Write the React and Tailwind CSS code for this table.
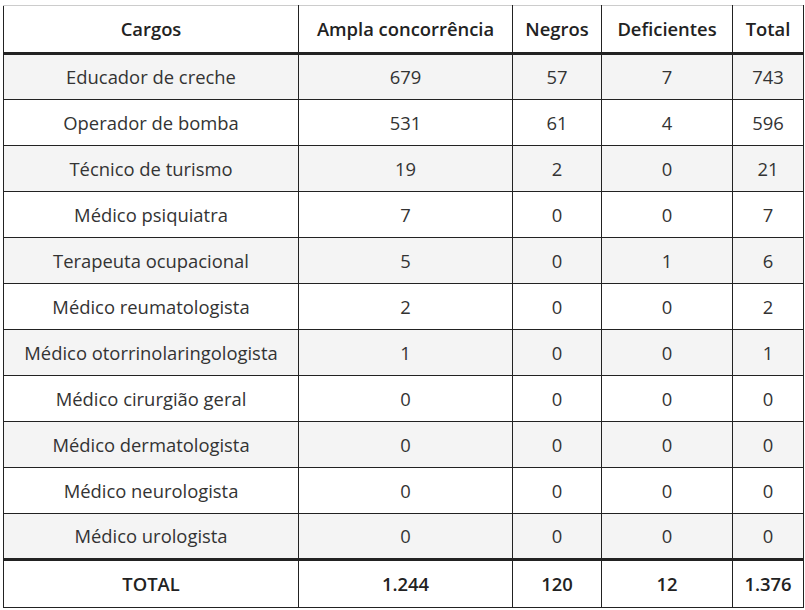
const rows = [
  ["Educador de creche", "679", "57", "7", "743"],
  ["Operador de bomba", "531", "61", "4", "596"],
  ["Técnico de turismo", "19", "2", "0", "21"],
  ["Médico psiquiatra", "7", "0", "0", "7"],
  ["Terapeuta ocupacional", "5", "0", "1", "6"],
  ["Médico reumatologista", "2", "0", "0", "2"],
  ["Médico otorrinolaringologista", "1", "0", "0", "1"],
  ["Médico cirurgião geral", "0", "0", "0", "0"],
  ["Médico dermatologista", "0", "0", "0", "0"],
  ["Médico neurologista", "0", "0", "0", "0"],
  ["Médico urologista", "0", "0", "0", "0"],
];

const headers = ["Cargos", "Ampla concorrência", "Negros", "Deficientes", "Total"];
const totals = ["TOTAL", "1.244", "120", "12", "1.376"];

export default function App() {
  return (
    <div className="bg-white min-h-screen pl-[3px] pt-[5px] text-[#333] font-['Open_Sans',sans-serif] text-[18.4px]">
      <table className="table-fixed w-[800px] border-collapse text-center">
        <colgroup>
          <col className="w-[295px]" />
          <col className="w-[214px]" />
          <col className="w-[89px]" />
          <col className="w-[131px]" />
          <col className="w-[71px]" />
        </colgroup>
        <thead>
          <tr className="h-[48px] border-b-[3px] border-b-[#222]">
            {headers.map((h) => (
              <th
                key={h}
                className="border-x border-x-[#222] border-t border-t-[#ccc] font-semibold text-[#222] p-0 pb-px whitespace-nowrap"
              >
                {h}
              </th>
            ))}
          </tr>
        </thead>
        <tbody>
          {rows.map((r, i) => (
            <tr key={r[0]} className={`h-[46px] ${i % 2 === 0 ? "bg-[#f4f4f4]" : "bg-white"}`}>
              {r.map((c, j) => (
                <td key={j} className="border border-[#222] p-0 whitespace-nowrap">
                  {c}
                </td>
              ))}
            </tr>
          ))}
          <tr className="h-[48px] border-t-[3px] border-t-[#222]">
            {totals.map((c, j) => (
              <td key={j} className="border-x border-b border-x-[#222] border-b-[#222] p-0 font-semibold text-[#222]">
                {c}
              </td>
            ))}
          </tr>
        </tbody>
      </table>
    </div>
  );
}
